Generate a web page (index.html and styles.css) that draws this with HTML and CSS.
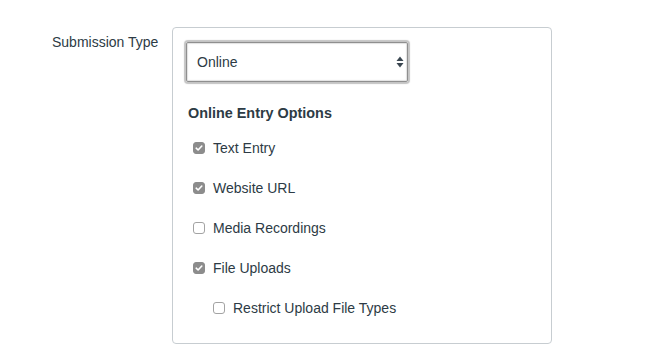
FILE: index.html
```html
<!DOCTYPE html>
<html lang="en">
<head>
    <meta charset="UTF-8">
    <title>Submission Type</title>
    <link rel="stylesheet" href="styles.css">
</head>
<body>
    <div class="form-row">
        <div class="field-label">Submission Type</div>
        <div class="field-box">
            <!-- Submission type select -->
            <div class="select-box">
                <span class="select-value">Online</span>
                <svg class="select-arrows" width="8" height="12" viewBox="0 0 8 12">
                    <path d="M4 0.5 L7.5 5 L0.5 5 Z" fill="#3a4650"/>
                    <path d="M4 11.5 L7.5 7 L0.5 7 Z" fill="#3a4650"/>
                </svg>
            </div>

            <div class="options-title">Online Entry Options</div>

            <div class="option-row">
                <span class="checkbox checked">
                    <svg width="12" height="12" viewBox="0 0 12 12"><path d="M3.2 6.2 L5.1 8 L8.8 4" fill="none" stroke="#fff" stroke-width="1.6" stroke-linecap="round" stroke-linejoin="round"/></svg>
                </span>
                <span class="option-label">Text Entry</span>
            </div>
            <div class="option-row">
                <span class="checkbox checked">
                    <svg width="12" height="12" viewBox="0 0 12 12"><path d="M3.2 6.2 L5.1 8 L8.8 4" fill="none" stroke="#fff" stroke-width="1.6" stroke-linecap="round" stroke-linejoin="round"/></svg>
                </span>
                <span class="option-label">Website URL</span>
            </div>
            <div class="option-row">
                <span class="checkbox"></span>
                <span class="option-label">Media Recordings</span>
            </div>
            <div class="option-row">
                <span class="checkbox checked">
                    <svg width="12" height="12" viewBox="0 0 12 12"><path d="M3.2 6.2 L5.1 8 L8.8 4" fill="none" stroke="#fff" stroke-width="1.6" stroke-linecap="round" stroke-linejoin="round"/></svg>
                </span>
                <span class="option-label">File Uploads</span>
            </div>
            <div class="option-row nested">
                <span class="checkbox"></span>
                <span class="option-label">Restrict Upload File Types</span>
            </div>
        </div>
    </div>
</body>
</html>
```

FILE: styles.css
```css
body {
    margin: 0;
    padding: 0;
    background-color: #fff;
    font-family: "Liberation Sans", Arial, sans-serif;
    font-size: 14px;
    color: #2d3b45;
}
.form-row {
    display: flex;
    align-items: flex-start;
    padding-top: 27px;
}
.field-label {
    width: 172px;
    box-sizing: border-box;
    padding-left: 52px;
    padding-top: 6px;
    font-size: 14px;
    line-height: 18px;
}
.field-box {
    width: 380px;
    height: 317px;
    box-sizing: border-box;
    border: 1px solid #c7cdd1;
    border-radius: 4px;
    padding: 14px 13px 15px 13px;
}
.select-box {
    width: 222px;
    height: 40px;
    box-sizing: border-box;
    border: 1px solid #8f8f8f;
    box-shadow: 0 0 1px 2px #c4c4c4, inset 0 0 1px 1px #e2e2e2;
    border-radius: 2px;
    display: flex;
    align-items: center;
    justify-content: space-between;
    padding: 0 3px 0 10px;
    font-size: 14px;
}
.options-title {
    margin-top: 21px;
    padding-left: 2px;
    font-weight: bold;
    font-size: 14.4px;
    line-height: 20px;
}
.option-row {
    display: flex;
    align-items: center;
    height: 40px;
    padding-left: 7px;
}
.options-title + .option-row {
    margin-top: 5px;
}
.option-row.nested {
    padding-left: 27px;
}
.checkbox {
    width: 12px;
    height: 12px;
    box-sizing: border-box;
    border: 1px solid #a3a3a3;
    border-radius: 3px;
    background-color: #fff;
    display: flex;
    align-items: center;
    justify-content: center;
    margin-right: 8px;
}
.checkbox.checked {
    background-color: #8c8c8c;
    border-color: #8c8c8c;
}
.checkbox svg {
    flex: none;
}
.option-label {
    font-size: 14px;
    line-height: 20px;
}
```
